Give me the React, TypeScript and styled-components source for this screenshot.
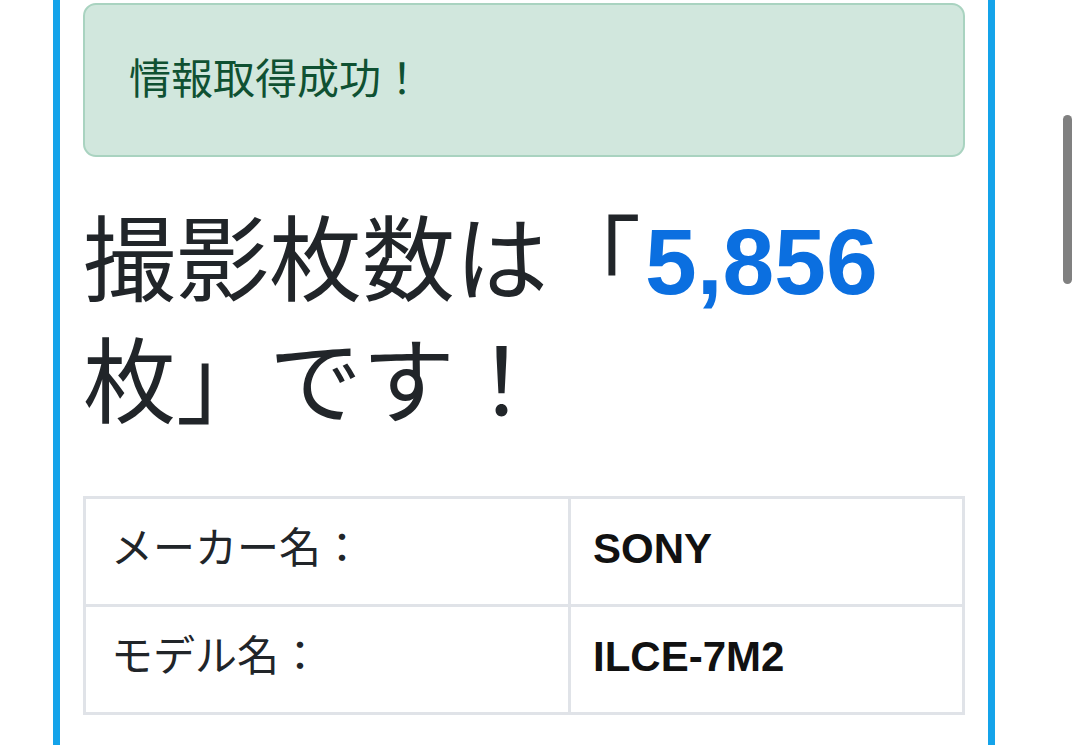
import * as React from 'react'
import styled, { createGlobalStyle } from 'styled-components'

const GlobalStyle = createGlobalStyle`
    html, body {
        margin: 0;
        padding: 0;
        background: #fff;
        overflow: hidden;
    }
    body {
        font-family: "Liberation Sans", "Noto Sans CJK JP", sans-serif;
        color: #212529;
    }
`

type Row = { label: string, value: string }

const rows: Row[] = [
    { label: 'メーカー名：', value: 'SONY' },
    { label: 'モデル名：', value: 'ILCE-7M2' },
]

const shotCount = 5856

export default function App() {
    return (
        <Page>
            <GlobalStyle />
            <Panel>
                <Alert>情報取得成功！</Alert>
                <Heading>
                    撮影枚数は「<Count>{shotCount.toLocaleString('en-US')}</Count>枚」です！
                </Heading>
                <InfoTable>
                    <tbody>
                        {rows.map(row => (
                            <tr key={row.label}>
                                <LabelCell>{row.label}</LabelCell>
                                <ValueCell>{row.value}</ValueCell>
                            </tr>
                        ))}
                    </tbody>
                </InfoTable>
            </Panel>
            <ScrollThumb />
        </Page>
    )
}

const Page = styled('div')`
    position: relative;
    width: 1080px;
    height: 745px;
    overflow: hidden;
`

const Panel = styled('section')`
    box-sizing: border-box;
    width: 942px;
    min-height: 745px;
    margin-left: 53px;
    padding: 3px 23px 0;
    border-left: 7px solid #14a3ea;
    border-right: 7px solid #14a3ea;
`

const Alert = styled('div')`
    box-sizing: border-box;
    height: 154px;
    display: flex;
    align-items: center;
    padding: 0 44px;
    background-color: #d1e7dd;
    border: 2px solid #a9d3c0;
    border-radius: 13px;
    color: #0f5132;
    font-size: 42px;
    line-height: 1;
`

const Heading = styled('h1')`
    margin: 44px 0 51px;
    font-size: 93px;
    font-weight: 400;
    line-height: 122px;
    color: #212529;
`

const Count = styled('span')`
    color: #0b6fe0;
    font-weight: 700;
    margin-left: 4px;
`

const InfoTable = styled('table')`
    width: 100%;
    border-collapse: collapse;
    font-size: 42px;
    line-height: 62px;
`

const LabelCell = styled('td')`
    width: 485px;
    box-sizing: border-box;
    padding: 19px 25px 24px;
    border: 3px solid #e0e3e8;
    font-weight: 400;
`

const ValueCell = styled('td')`
    padding: 19px 22px 24px;
    border: 3px solid #e0e3e8;
    font-weight: 700;
    color: #111;
`

const ScrollThumb = styled('div')`
    position: absolute;
    top: 115px;
    left: 1063px;
    width: 9px;
    height: 169px;
    border-radius: 5px;
    background-color: #808080;
`
